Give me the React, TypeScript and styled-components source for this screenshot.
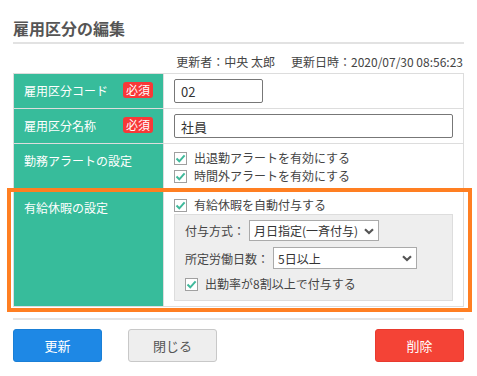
import { ReactElement, ReactNode } from "react";
import styled, { createGlobalStyle } from "styled-components";

const GlobalStyle = createGlobalStyle`
  body {
    margin: 0;
    background: #fff;
    font-family: "Noto Sans CJK JP", "Noto Sans", sans-serif;
    color: #444;
  }
`;

const colors = {
  GREEN: "#37bc9b",
  BORDER: "#dddddd",
  TEXT: "#444444",
  RED_BADGE: "#f83838",
  ORANGE: "#ff7f22",
  BLUE: "#1e88e5",
  RED: "#f44336",
};

const Page = styled.div`
  width: 451px;
  padding: 16px 0 0 13px;
`;

const Title = styled.h1`
  margin: 0;
  font-size: 16px;
  font-weight: 700;
  line-height: 24px;
  color: #555;
  padding-bottom: 2px;
  border-bottom: 2px solid #e2e2e2;
`;

const Meta = styled.div`
  margin-top: 9px;
  font-size: 12px;
  line-height: 18px;
  text-align: right;
  padding-right: 1px;
  color: #444;
  span + span {
    margin-left: 16px;
  }
`;

const Table = styled.div`
  margin-top: 2px;
  border: 1px solid ${colors.BORDER};
`;

const Row = styled.div<{ $highlight?: boolean }>`
  display: grid;
  grid-template-columns: 150px 1fr;
  position: relative;
  & + & {
    border-top: 1px solid ${colors.BORDER};
  }
  ${(p) =>
    p.$highlight &&
    `
    &::after {
      content: "";
      position: absolute;
      left: -7px;
      right: -9px;
      top: -3px;
      bottom: -6px;
      border: 4px solid ${colors.ORANGE};
      pointer-events: none;
    }
  `}
`;

const Label = styled.div`
  background: ${colors.GREEN};
  color: #fff;
  font-size: 12px;
  line-height: 20px;
  padding: 7px 10px;
  border-right: 1px solid ${colors.BORDER};
  display: flex;
  justify-content: space-between;
  align-items: flex-start;
`;

const Badge = styled.span`
  width: 30px;
  height: 16px;
  margin-top: 1px;
  border-radius: 3px;
  background: ${colors.RED_BADGE};
  color: #fff;
  font-size: 12px;
  line-height: 16px;
  text-align: center;
`;

const Cell = styled.div`
  padding: 5px 10px;
  font-size: 12px;
  color: ${colors.TEXT};
`;

const TextInput = styled.input<{ $width: number }>`
  box-sizing: border-box;
  display: block;
  width: ${(p) => p.$width}px;
  height: 24px;
  border: 1px solid #777;
  border-radius: 2px;
  padding: 0 6px;
  font-family: inherit;
  font-size: 13px;
  color: #333;
  outline: none;
`;

const CheckRow = styled.label`
  display: flex;
  align-items: center;
  gap: 7px;
  line-height: 18px;
  font-size: 12px;
  color: ${colors.TEXT};
`;

const Box = styled.span`
  box-sizing: border-box;
  width: 13px;
  height: 13px;
  border: 1px solid #a0a0a0;
  background: #fff;
  display: flex;
  align-items: center;
  justify-content: center;
`;

function Checkbox({ children }: { children: ReactNode }) {
  return (
    <CheckRow>
      <Box>
        <svg width="11" height="11" viewBox="0 0 11 11">
          <path
            d="M1.5 5.5 L4.3 8.3 L9.6 2.4"
            fill="none"
            stroke="#3fb99b"
            strokeWidth="2"
          />
        </svg>
      </Box>
      {children}
    </CheckRow>
  );
}

const SubPanel = styled.div`
  background: #eeeeee;
  border: 1px solid ${colors.BORDER};
  padding: 5px 10px 7px;
  display: flex;
  flex-direction: column;
  gap: 6px;
`;

const FieldRow = styled.div`
  display: flex;
  align-items: center;
  gap: 4px;
  font-size: 12px;
  color: ${colors.TEXT};
`;

const SelectWrap = styled.div<{ $width: number; $height: number }>`
  position: relative;
  width: ${(p) => p.$width}px;
  height: ${(p) => p.$height}px;
  svg {
    position: absolute;
    right: 5px;
    top: 50%;
    margin-top: -3px;
    pointer-events: none;
  }
`;

const SelectBox = styled.select`
  appearance: none;
  box-sizing: border-box;
  width: 100%;
  height: 100%;
  border: 1px solid #aaa;
  border-radius: 0;
  background: #fff;
  padding: 0 18px 0 4px;
  font-family: inherit;
  font-size: 12px;
  color: #333;
  outline: none;
`;

function Select({
  width,
  height,
  options,
}: {
  width: number;
  height: number;
  options: string[];
}) {
  return (
    <SelectWrap $width={width} $height={height}>
      <SelectBox defaultValue={options[0]}>
        {options.map((o) => (
          <option key={o}>{o}</option>
        ))}
      </SelectBox>
      <svg width="10" height="7" viewBox="0 0 10 7">
        <polyline
          points="1,1.2 5,5 9,1.2"
          fill="none"
          stroke="#555"
          strokeWidth="2.2"
        />
      </svg>
    </SelectWrap>
  );
}

const Divider = styled.div`
  margin-top: 11px;
  border-top: 2px solid #e4e4e4;
`;

const Buttons = styled.div`
  margin-top: 9px;
  display: flex;
  gap: 26px;
  & > :last-child {
    margin-left: auto;
  }
`;

const Button = styled.button<{ $variant: "primary" | "plain" | "danger" }>`
  width: 89px;
  height: 33px;
  border-radius: 3px;
  font-family: inherit;
  font-size: 13px;
  cursor: pointer;
  border: 1px solid
    ${(p) =>
      p.$variant === "primary"
        ? "#1a7fd6"
        : p.$variant === "danger"
          ? "#e83a2e"
          : "#c8c8c8"};
  background: ${(p) =>
    p.$variant === "primary"
      ? colors.BLUE
      : p.$variant === "danger"
        ? colors.RED
        : "#eeeeee"};
  color: ${(p) => (p.$variant === "plain" ? "#555" : "#fff")};
`;

export default function App(): ReactElement {
  return (
    <>
      <GlobalStyle />
      <Page>
        <Title>雇用区分の編集</Title>
        <Meta>
          <span>更新者：中央 太郎</span>
          <span>更新日時：2020/07/30 08:56:23</span>
        </Meta>
        <Table>
          <Row>
            <Label>
              雇用区分コード<Badge>必須</Badge>
            </Label>
            <Cell>
              <TextInput $width={89} defaultValue="02" />
            </Cell>
          </Row>
          <Row>
            <Label>
              雇用区分名称<Badge>必須</Badge>
            </Label>
            <Cell>
              <TextInput $width={279} defaultValue="社員" />
            </Cell>
          </Row>
          <Row>
            <Label>勤務アラートの設定</Label>
            <Cell>
              <Checkbox>出退勤アラートを有効にする</Checkbox>
              <Checkbox>時間外アラートを有効にする</Checkbox>
            </Cell>
          </Row>
          <Row $highlight>
            <Label>有給休暇の設定</Label>
            <Cell>
              <Checkbox>有給休暇を自動付与する</Checkbox>
              <SubPanel>
                <FieldRow>
                  付与方式：
                  <Select width={130} height={21} options={["月日指定(一斉付与)"]} />
                </FieldRow>
                <FieldRow>
                  所定労働日数：
                  <Select width={144} height={22} options={["5日以上"]} />
                </FieldRow>
                <Checkbox>出勤率が8割以上で付与する</Checkbox>
              </SubPanel>
            </Cell>
          </Row>
        </Table>
        <Divider />
        <Buttons>
          <Button $variant="primary">更新</Button>
          <Button $variant="plain">閉じる</Button>
          <Button $variant="danger">削除</Button>
        </Buttons>
      </Page>
    </>
  );
}
